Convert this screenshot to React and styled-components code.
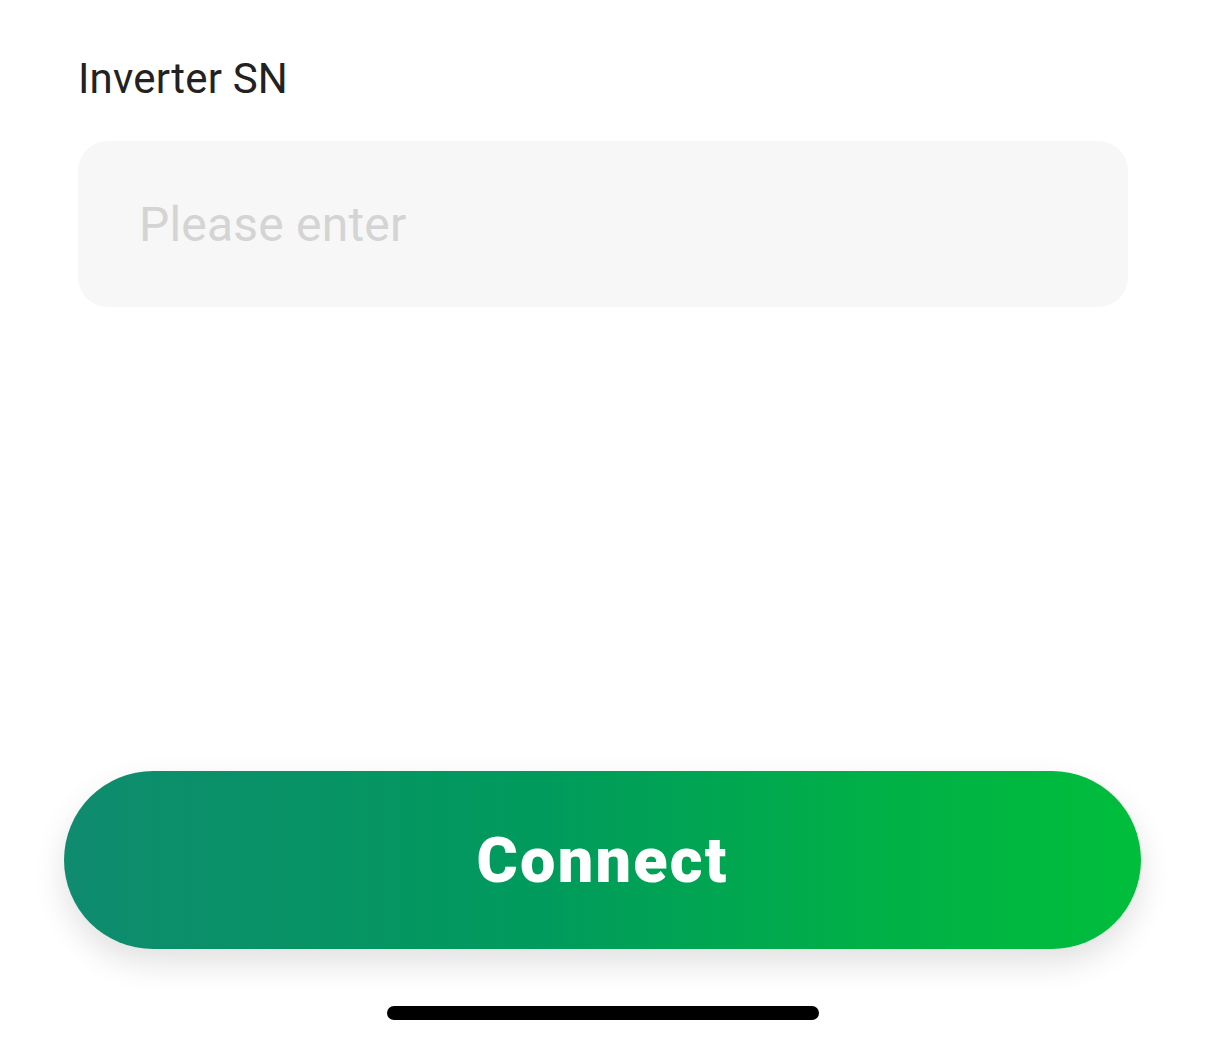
import React from 'react';
import styled, { createGlobalStyle } from 'styled-components';

const GlobalStyle = createGlobalStyle`
  html, body {
    margin: 0;
    padding: 0;
    background: #ffffff;
  }
  body {
    font-family: Roboto, "Liberation Sans", sans-serif;
  }
`;

const Screen = styled.div`
  width: 1206px;
  height: 1040px;
  display: flex;
  flex-direction: column;
  background: #ffffff;
  overflow: hidden;
`;

const Form = styled.div`
  display: flex;
  flex-direction: column;
  padding: 54px 78px 0 78px;
`;

const Label = styled.div`
  font-size: 42px;
  line-height: 50px;
  color: #222222;
  letter-spacing: 0.2px;
`;

const Field = styled.input`
  margin-top: 37px;
  height: 166px;
  box-sizing: border-box;
  border: none;
  outline: none;
  border-radius: 30px;
  background: #f7f7f7;
  padding: 0 61px;
  font-family: Roboto, "Liberation Sans", sans-serif;
  font-size: 48px;
  color: #222222;
  letter-spacing: 0.2px;
  &::placeholder {
    color: #d4d4d4;
  }
`;

const Footer = styled.div`
  margin-top: auto;
  display: flex;
  flex-direction: column;
  align-items: center;
  padding: 0 65px 20px 64px;
`;

const ConnectButton = styled.button`
  width: 100%;
  height: 178px;
  border: none;
  border-radius: 89px;
  background: linear-gradient(90deg, #0f8b6f 0%, #009b5c 45%, #00b047 75%, #00be3b 100%);
  box-shadow: 0 14px 32px rgba(0, 0, 0, 0.12);
  color: #ffffff;
  font-family: Roboto, "Liberation Sans", sans-serif;
  font-weight: 900;
  font-size: 63px;
  letter-spacing: 2.2px;
  cursor: pointer;
`;

const HomeIndicator = styled.div`
  margin-top: 57px;
  width: 432px;
  height: 14px;
  border-radius: 7px;
  background: #000000;
`;

export default function App() {
  return (
    <Screen>
      <GlobalStyle />
      <Form>
        <Label>Inverter SN</Label>
        <Field placeholder="Please enter" />
      </Form>
      <Footer>
        <ConnectButton>Connect</ConnectButton>
        <HomeIndicator />
      </Footer>
    </Screen>
  );
}
